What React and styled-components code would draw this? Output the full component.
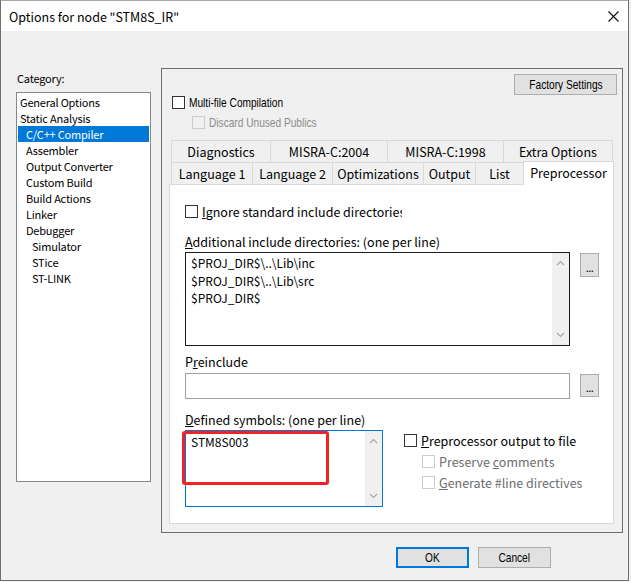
import React from "react";
import styled, { createGlobalStyle } from "styled-components";

const UI = `"Noto Sans CJK SC", "Noto Sans", sans-serif`;
const NARROW = `"Liberation Sans", Arial, sans-serif`;

const GlobalStyle = createGlobalStyle`
  html, body {
    margin: 0;
    padding: 0;
    background: #f0f0f0;
  }
  body {
    font-family: ${UI};
    font-size: 12.5px;
    color: #000;
  }
  * {
    box-sizing: border-box;
  }
`

const Window = styled.div`
    width: 629px;
    height: 581px;
    border: 1px solid #6e6e6e;
    border-top-color: #a8a8a8;
    background: #f0f0f0;
    display: flex;
    flex-direction: column;
`

const TitleBar = styled.div`
    height: 30px;
    background: #ffffff;
    display: flex;
    align-items: center;
    justify-content: space-between;
    padding: 0 9px 0 8px;
`

const Title = styled.span`
    font-size: 12.5px;
    color: #000;
`

const Main = styled.div`
    display: flex;
    align-items: flex-start;
    padding: 37px 0 0 15px;
`

const Sidebar = styled.div`
    width: 135px;
    padding-top: 2px;
    font-size: 11px;
    letter-spacing: -0.2px;
`

const Label = styled.div`
    line-height: 16px;
    height: 16px;
    margin-left: ${p => p.$indent || 0}px;
    margin-top: ${p => p.$top || 0}px;
    white-space: nowrap;
`

const ListBox = styled.div`
    margin-top: 6px;
    height: 390px;
    background: #fff;
    border: 1px solid #828790;
    padding: 1px 1px;
`

const ListItem = styled.div`
    height: 16px;
    line-height: 16px;
    padding-left: ${p => 2 + p.$level * 6}px;
    background: ${p => p.$selected ? "#0078d7" : "transparent"};
    color: ${p => p.$selected ? "#fff" : "#000"};
    white-space: nowrap;
`

const Panel = styled.div`
    margin-left: 10px;
    width: 462px;
    height: 465px;
    border: 1px solid #6e6e6e;
    display: flex;
    flex-direction: column;
`

const PanelTop = styled.div`
    display: flex;
    justify-content: space-between;
    align-items: flex-start;
    padding: 0 5px 0 10px;
`

const TopOptions = styled.div`
    padding-top: 23px;
`

const CheckRow = styled.label`
    display: flex;
    align-items: center;
    height: ${p => p.$h || 20}px;
    margin-left: ${p => p.$indent || 0}px;
    color: ${p => p.$disabled ? (p.$light ? "#8c8c8c" : "#6d6d6d") : "#000"};
    white-space: nowrap;
`

/* classic dialog font: tall, narrow glyphs */
const Condensed = styled.span`
    display: inline-block;
    font-family: ${NARROW};
    font-size: ${p => p.$size || 13}px;
    transform: scaleX(0.78);
    transform-origin: ${p => p.$center ? "center" : "left"} center;
`

const Box = styled.span`
    width: 13px;
    height: 13px;
    flex: none;
    border: 1px solid ${p => p.$disabled ? "#cccccc" : "#333333"};
    background: ${p => p.$disabled ? "transparent" : "#fff"};
    margin-right: 4px;
`

const Clip = styled.span`
    display: inline-block;
    width: ${p => p.$w}px;
    overflow: hidden;
`

const Button = styled.div`
    width: ${p => p.$w}px;
    height: 21px;
    display: flex;
    align-items: center;
    justify-content: center;
    background: #e1e1e1;
    border: ${p => p.$default ? "2px solid #0078d7" : "1px solid #adadad"};
    color: #000;
    white-space: nowrap;
`

const TopButton = styled(Button)`
    margin-top: 5px;
`

const Tabs = styled.div`
    margin: 8px 0 0 7px;
    width: 445px;
`

const TabRow = styled.div`
    display: flex;
    align-items: flex-start;
    height: 22px;
    padding-left: 2px;
`

const Tab = styled.div`
    width: ${p => p.$w}px;
    height: ${p => p.$active ? 24 : 22}px;
    margin-top: ${p => p.$active ? -1 : 0}px;
    margin-left: -1px;
    &:first-child {
        margin-left: 0;
    }
    padding-bottom: ${p => p.$active ? 2 : 0}px;
    border: 1px solid #d9d9d9;
    border-bottom: none;
    background: ${p => p.$active ? "#fff" : "#f0f0f0"};
    display: flex;
    align-items: center;
    justify-content: center;
    white-space: nowrap;
    position: relative;
    z-index: ${p => p.$active ? 2 : 1};
`

const TabPage = styled.div`
    height: 340px;
    background: #fff;
    border: 1px solid #d9d9d9;
    padding: 16px 0 0 15px;
`

const FieldRow = styled.div`
    display: flex;
    align-items: flex-start;
    gap: 10px;
    margin-top: ${p => p.$top || 0}px;
`

const TextBox = styled.div`
    width: ${p => p.$w}px;
    height: ${p => p.$h}px;
    background: #fff;
    border: 1px solid ${p => p.$tone};
    display: flex;
    position: relative;
`

const TextLines = styled.div`
    flex: 1;
    padding: ${p => p.$pt || 1}px 0 0 5px;
    line-height: 17.5px;
    font-size: 12px;
    white-space: nowrap;
`

const ScrollBar = styled.div`
    width: 17px;
    background: #f0f0f0;
    display: flex;
    flex-direction: column;
    justify-content: space-between;
    align-items: center;
    padding: 7px 0 7px;
`

const EllipsisButton = styled.div`
    width: 19px;
    height: ${p => p.$h}px;
    margin-top: 1px;
    background: #e1e1e1;
    border: 1px solid #adadad;
    display: flex;
    justify-content: center;
    align-items: center;
    padding-top: 3px;
    font-size: 11px;
    letter-spacing: -0.5px;
`

const SymbolsRow = styled.div`
    display: flex;
    align-items: flex-start;
    gap: 21px;
    margin-top: 2px;
`

const SideOptions = styled.div`
    display: flex;
    flex-direction: column;
    margin-top: -1px;
`

const Highlight = styled.div`
    position: absolute;
    left: -4px;
    top: 0px;
    width: 147px;
    height: 54px;
    border: 3px solid #f52222;
    border-radius: 3px;
    pointer-events: none;
`

const Footer = styled.div`
    display: flex;
    justify-content: flex-end;
    gap: 9px;
    padding: 14px 77px 0 0;
`

const Chevron = ({ down }) => (
    <svg width="9" height="6" viewBox="0 0 9 6">
        <polyline
            points={down ? "1,1 4.5,4.5 8,1" : "1,5 4.5,1.5 8,5"}
            fill="none"
            stroke="#a6a6a6"
            strokeWidth="1.2"
        />
    </svg>
)

const CloseIcon = () => (
    <svg width="11" height="11" viewBox="0 0 11 11">
        <path d="M0.5 0.5 L10.5 10.5 M10.5 0.5 L0.5 10.5" stroke="#111" strokeWidth="1.1" />
    </svg>
)

const categories = [
    ["General Options", 0],
    ["Static Analysis", 0],
    ["C/C++ Compiler", 1],
    ["Assembler", 1],
    ["Output Converter", 1],
    ["Custom Build", 1],
    ["Build Actions", 1],
    ["Linker", 1],
    ["Debugger", 1],
    ["Simulator", 2],
    ["STice", 2],
    ["ST-LINK", 2],
]

const topTabs = [["Diagnostics", 100], ["MISRA-C:2004", 118], ["MISRA-C:1998", 117], ["Extra Options", 110]]
const bottomTabs = [["Language 1", 82], ["Language 2", 81], ["Optimizations", 92], ["Output", 53], ["List", 49], ["Preprocessor", 91]]

const App = () => {
    return (
        <>
            <GlobalStyle />
            <Window>
                <TitleBar>
                    <Title>Options for node "STM8S_IR"</Title>
                    <CloseIcon />
                </TitleBar>
                <Main>
                    <Sidebar>
                        <Label $indent={1}>Category:</Label>
                        <ListBox>
                            {categories.map(([name, level]) => (
                                <ListItem key={name} $level={level} $selected={name === "C/C++ Compiler"}>
                                    {name}
                                </ListItem>
                            ))}
                        </ListBox>
                    </Sidebar>
                    <Panel>
                        <PanelTop>
                            <TopOptions>
                                <CheckRow>
                                    <Box /><Condensed>Multi-file Compilation</Condensed>
                                </CheckRow>
                                <CheckRow $disabled $light $indent={20}>
                                    <Box $disabled /><Condensed>Discard Unused Publics</Condensed>
                                </CheckRow>
                            </TopOptions>
                            <TopButton $w={103}><Condensed $center>Factory Settings</Condensed></TopButton>
                        </PanelTop>
                        <Tabs>
                            <TabRow>
                                {topTabs.map(([t, w]) => <Tab key={t} $w={w}>{t}</Tab>)}
                            </TabRow>
                            <TabRow>
                                {bottomTabs.map(([t, w]) => (
                                    <Tab key={t} $w={w} $active={t === "Preprocessor"}>{t}</Tab>
                                ))}
                            </TabRow>
                            <TabPage>
                                <CheckRow>
                                    <Box />
                                    <Clip $w={200}><u>I</u>gnore standard include directories</Clip>
                                </CheckRow>
                                <Label $top={13}><u>A</u>dditional include directories: (one per line)</Label>
                                <FieldRow $top={2}>
                                    <TextBox $w={385} $h={94} $tone="#1a1a1a">
                                        <TextLines>
                                            <div>$PROJ_DIR$\..\Lib\inc</div>
                                            <div>$PROJ_DIR$\..\Lib\src</div>
                                            <div>$PROJ_DIR$</div>
                                        </TextLines>
                                        <ScrollBar>
                                            <Chevron />
                                            <Chevron down />
                                        </ScrollBar>
                                    </TextBox>
                                    <EllipsisButton $h={24}>...</EllipsisButton>
                                </FieldRow>
                                <Label $top={8}>P<u>r</u>einclude</Label>
                                <FieldRow $top={3}>
                                    <TextBox $w={385} $h={26} $tone="#a0a0a0" />
                                    <EllipsisButton $h={23}>...</EllipsisButton>
                                </FieldRow>
                                <Label $top={13}><u>D</u>efined symbols: (one per line)</Label>
                                <SymbolsRow>
                                    <TextBox $w={198} $h={77} $tone="#0078d7">
                                        <TextLines $pt={2}>
                                            <div>STM8S003</div>
                                        </TextLines>
                                        <ScrollBar>
                                            <Chevron />
                                            <Chevron down />
                                        </ScrollBar>
                                        <Highlight />
                                    </TextBox>
                                    <SideOptions>
                                        <CheckRow $h={22}>
                                            <Box /><span><u>P</u>reprocessor output to file</span>
                                        </CheckRow>
                                        <CheckRow $h={21} $indent={18} $disabled>
                                            <Box $disabled /><span>Preserve <u>c</u>omments</span>
                                        </CheckRow>
                                        <CheckRow $h={21} $indent={18} $disabled>
                                            <Box $disabled /><span><u>G</u>enerate #line directives</span>
                                        </CheckRow>
                                    </SideOptions>
                                </SymbolsRow>
                            </TabPage>
                        </Tabs>
                    </Panel>
                </Main>
                <Footer>
                    <Button $w={73} $default><Condensed $center>OK</Condensed></Button>
                    <Button $w={73}><Condensed $center>Cancel</Condensed></Button>
                </Footer>
            </Window>
        </>
    )
}

export default App
